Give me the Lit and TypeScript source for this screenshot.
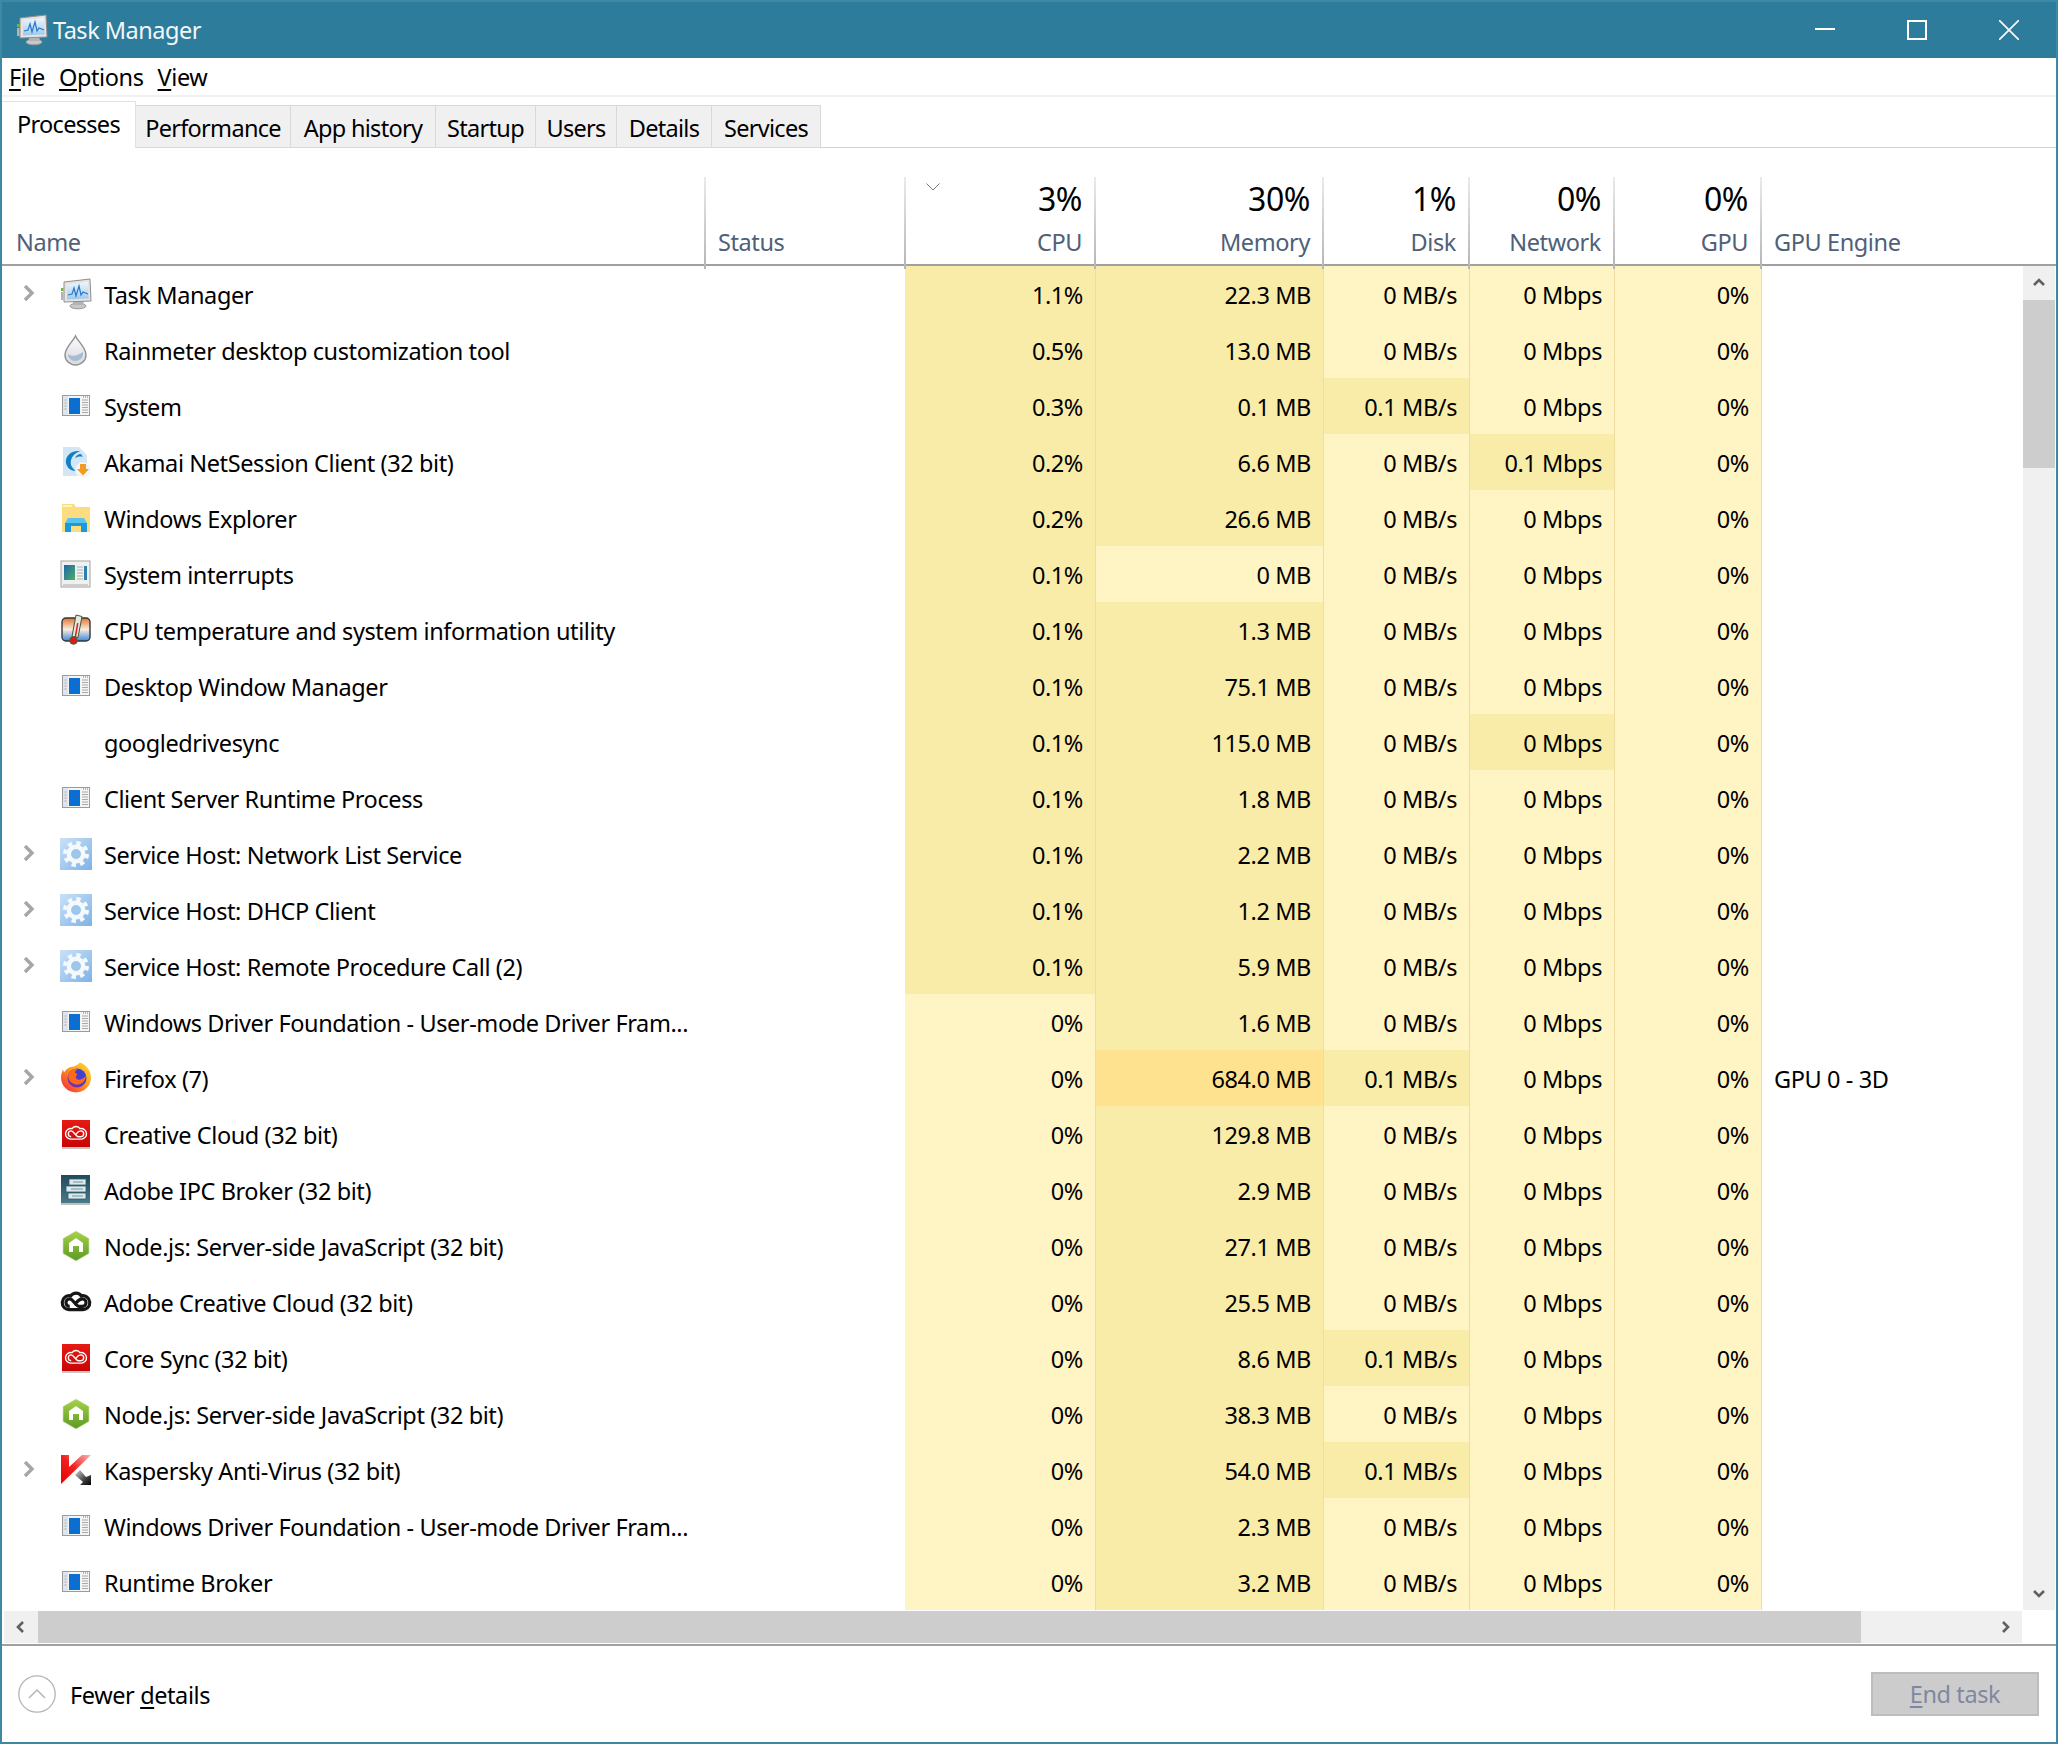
import { LitElement, css, html, svg } from "lit";
import { customElement } from "lit/decorators.js";

type IconName = "tm" | "drop" | "win" | "akamai" | "folder" | "irq" | "temp" | "none" | "gear" | "firefox" | "cc" | "ipc" | "node" | "acc" | "kav";

interface Proc {
  name: string;
  icon: IconName;
  expand?: boolean;
  cpu: string;
  mem: string;
  disk: string;
  net: string;
  engine?: string;
  hot?: boolean; // googledrivesync has a warm network cell with 0 Mbps
}

const p = (name: string, icon: IconName, expand: boolean, cpu: string, mem: string, disk = "0 MB/s", net = "0 Mbps", engine = "", hot = false): Proc => ({
  name, icon, expand, cpu, mem, disk, net, engine, hot,
});

const PROCS: Proc[] = [
  p("Task Manager", "tm", true, "1.1%", "22.3 MB"),
  p("Rainmeter desktop customization tool", "drop", false, "0.5%", "13.0 MB"),
  p("System", "win", false, "0.3%", "0.1 MB", "0.1 MB/s"),
  p("Akamai NetSession Client (32 bit)", "akamai", false, "0.2%", "6.6 MB", "0 MB/s", "0.1 Mbps"),
  p("Windows Explorer", "folder", false, "0.2%", "26.6 MB"),
  p("System interrupts", "irq", false, "0.1%", "0 MB"),
  p("CPU temperature and system information utility", "temp", false, "0.1%", "1.3 MB"),
  p("Desktop Window Manager", "win", false, "0.1%", "75.1 MB"),
  p("googledrivesync", "none", false, "0.1%", "115.0 MB", "0 MB/s", "0 Mbps", "", true),
  p("Client Server Runtime Process", "win", false, "0.1%", "1.8 MB"),
  p("Service Host: Network List Service", "gear", true, "0.1%", "2.2 MB"),
  p("Service Host: DHCP Client", "gear", true, "0.1%", "1.2 MB"),
  p("Service Host: Remote Procedure Call (2)", "gear", true, "0.1%", "5.9 MB"),
  p("Windows Driver Foundation - User-mode Driver Fram...", "win", false, "0%", "1.6 MB"),
  p("Firefox (7)", "firefox", true, "0%", "684.0 MB", "0.1 MB/s", "0 Mbps", "GPU 0 - 3D"),
  p("Creative Cloud (32 bit)", "cc", false, "0%", "129.8 MB"),
  p("Adobe IPC Broker (32 bit)", "ipc", false, "0%", "2.9 MB"),
  p("Node.js: Server-side JavaScript (32 bit)", "node", false, "0%", "27.1 MB"),
  p("Adobe Creative Cloud (32 bit)", "acc", false, "0%", "25.5 MB"),
  p("Core Sync (32 bit)", "cc", false, "0%", "8.6 MB", "0.1 MB/s"),
  p("Node.js: Server-side JavaScript (32 bit)", "node", false, "0%", "38.3 MB"),
  p("Kaspersky Anti-Virus (32 bit)", "kav", true, "0%", "54.0 MB", "0.1 MB/s"),
  p("Windows Driver Foundation - User-mode Driver Fram...", "win", false, "0%", "2.3 MB"),
  p("Runtime Broker", "win", false, "0%", "3.2 MB"),
];

const CLOUD = svg`
  <path d="M10 23a6.6 6.6 0 1 1 1-13c2.4-3.6 8-3.6 10 0a6.6 6.6 0 1 1 1 13z" />
  <path d="M10 20a3.6 3.6 0 1 1 0-7.200c3.400 0 5.500 7.200 9 7.200h3a3.600 3.600 0 1 0 0-7.200c-2.500 0-4.500 2-6 4" />`;

function iconBody(name: IconName) {
  switch (name) {
    case "tm":
      return svg`
        <defs><linearGradient id="tmS" x1="0" y1="0" x2="0" y2="1"><stop offset="0" stop-color="#eef6fc" /><stop offset="1" stop-color="#9fc9ec" /></linearGradient></defs>
        <ellipse cx="18" cy="28" rx="8" ry="2.800" fill="#c8c8c8" stroke="#9a9a9a" />
        <path d="M13 22h10l1 5H13z" fill="#b4b4b4" />
        <path d="M4 4 30 1l1 22-27 1z" fill="#e4e4e4" stroke="#8e8e8e" />
        <path d="M7 6.500 28 4l.700 16.500L7 21.500z" fill="url(#tmS)" />
        <path d="M8 17l4-1 2-6 2 8 3-10 2 9 2-3 5 2" fill="none" stroke="#2778cc" stroke-width="1.200" />
        <path d="M1 10h2.500v3H1z" fill="#6cbb3c" /><path d="M1 14h2.500v8H1z" fill="#b4b4b4" />`;
    case "drop":
      return svg`
        <defs><linearGradient id="dr" x1="0" y1="0" x2="0" y2="1"><stop offset="0" stop-color="#fbfbfb" /><stop offset="1" stop-color="#d6dadf" /></linearGradient></defs>
        <path d="M15.500 2c2 5 10.500 11 10.500 19a10.500 10 0 0 1-21 0C5 13 13.500 7 15.500 2z" fill="url(#dr)" stroke="#8f8f8f" stroke-width="1.400" />
        <path d="M8 20c4 3 9 2 15-2 1 5-3 9-7.500 9S8 24 8 20z" fill="#a9bcd6" />`;
    case "win":
      return svg`
        <rect x="2.500" y="5.500" width="27" height="20" fill="#f5f5f5" stroke="#9b9b9b" />
        <rect x="3" y="6" width="5" height="19" fill="#dfe5ee" />
        <rect x="9" y="8" width="11" height="16" fill="#0b6fd2" />
        <path d="M22 10h6M22 12.500h6M22 15h6M22 17.500h6M22 20h6M22 22.500h6M4.500 10h2M4.500 13h2M4.500 16h2M4.500 19h2" stroke="#a8a8a8" />
        <path d="M23 7h1M25 7h1M27 7h1" stroke="#777" />`;
    case "akamai":
      return svg`
        <path d="M3 1h16l8 8v16l-5 5H3z" fill="#d3e6f5" />
        <path d="M20 5C11 4 5 10 6 17c1 5 5 8 10 8-4-3-6-6-5-11 1-4 4-7 9-9z" fill="#1280c4" />
        <path d="M21 8c-3 0-5 2-6 4 2-1 5-2 8-1z" fill="#1280c4" />
        <circle cx="23" cy="24" r="7.800" fill="#f2f6fa" />
        <path d="M20 18h6v5h3l-6 6.500L17 23h3z" fill="#f39a22" />`;
    case "folder":
      return svg`
        <path d="M2 2h12l2 3h14v25H2z" fill="#fbdd80" />
        <path d="M3 3h9v2H3z" fill="#fff3c2" />
        <path d="M5 30V21h22v9h-6v-6H11v6z" fill="#1a9ad8" />
        <path d="M5 21l3-5h16l3 5z" fill="#59c3ee" />`;
    case "irq":
      return svg`
        <defs><linearGradient id="iq" x1="0" y1="0" x2="1" y2="1"><stop offset="0" stop-color="#1d66a8" /><stop offset="1" stop-color="#4fae66" /></linearGradient></defs>
        <rect x="1" y="3" width="29" height="26" fill="#f0f0f0" stroke="#a3a3a3" />
        <rect x="4" y="7" width="11" height="15" fill="url(#iq)" />
        <path d="M17 9h6M17 12h6M17 15h6M17 18h6M17 21h6" stroke="#b0b0b0" />
        <rect x="24" y="8" width="3" height="14" fill="#2c7fb0" />
        <rect x="3" y="26" width="25" height="2" fill="#cfcfcf" />`;
    case "temp":
      return svg`
        <defs><linearGradient id="tp" x1="0" y1="0" x2="0" y2="1"><stop offset="0" stop-color="#e8722a" /><stop offset=".5" stop-color="#f9ecdd" /><stop offset="1" stop-color="#3f86e0" /></linearGradient></defs>
        <rect x="2" y="4" width="28" height="23" rx="4" fill="url(#tp)" stroke="#33363c" stroke-width="1.400" />
        <path d="M16 1l6 1.500-4 21-6-1z" fill="#e9e9df" stroke="#3c5a38" />
        <path d="M17 9l1.500.300-2.600 15-1.500-.300z" fill="#d92020" />
        <circle cx="13.500" cy="26.500" r="3.800" fill="#e01818" stroke="#3c6b38" />`;
    case "gear":
      return svg`
        <defs><linearGradient id="gr" x1="0" y1="0" x2="1" y2="1"><stop offset="0" stop-color="#c9e2f8" /><stop offset="1" stop-color="#7fb2e4" /></linearGradient></defs>
        <rect width="32" height="32" fill="url(#gr)" />
        <circle cx="16" cy="16" r="11" fill="none" stroke="#f4f9fd" stroke-width="4" stroke-dasharray="4.300 4.340" />
        <circle cx="16" cy="16" r="7.200" fill="none" stroke="#f4f9fd" stroke-width="4.500" />
        <circle cx="16" cy="16" r="4.500" fill="#9cc6ec" />`;
    case "firefox":
      return svg`
        <defs>
          <linearGradient id="ff" x1="1" y1="0" x2="0" y2="1"><stop offset="0" stop-color="#ffe12e" /><stop offset=".45" stop-color="#ff9a1f" /><stop offset="1" stop-color="#f0203c" /></linearGradient>
          <linearGradient id="fg" x1="1" y1="0" x2="0" y2="1"><stop offset="0" stop-color="#2348e6" /><stop offset="1" stop-color="#8a2aa8" /></linearGradient>
        </defs>
        <path d="M20 .500c6 2 11 8 11 15a15 15 0 1 1-30 0c0-3 1-6 2-8l1 3c2-3 5-6 10-6 2-1 4-2 6-4z" fill="url(#ff)" />
        <circle cx="17" cy="16" r="9.500" fill="url(#fg)" />
        <path d="M9 11c2-3 6-5 9-4-2 1-3 2-3 4 2 0 3 2 1 3-1 3 3 5 6 3 2-1 3-2 4-3-1 7-7 10-12 8-5-2-7-7-5-11z" fill="#ff6a1a" />`;
    case "cc":
      return svg`
        <defs><linearGradient id="cr" x1="0" y1="0" x2="0" y2="1"><stop offset="0" stop-color="#e51b14" /><stop offset="1" stop-color="#c90505" /></linearGradient></defs>
        <rect x="2" y="2" width="28" height="27" fill="url(#cr)" />
        <rect x="2" y="29" width="28" height="2" fill="#c8c8c8" />
        <g transform="translate(16 15.500) scale(.8) translate(-16 -16)" fill="none" stroke="#fff" stroke-width="1.700">${CLOUD}</g>`;
    case "ipc":
      return svg`
        <defs><linearGradient id="ip" x1="0" y1="0" x2="0" y2="1"><stop offset="0" stop-color="#1f4a5c" /><stop offset="1" stop-color="#4a7a88" /></linearGradient></defs>
        <rect x="1" y="1" width="29" height="28" fill="url(#ip)" />
        <rect x="1" y="29" width="29" height="2" fill="#c0c0c0" />
        <path d="M9 5h17v6H9zM6 12h20v6H6zM8 19h18v6H8z" fill="#dfe9ec" stroke="#2b5a6a" stroke-width=".8" />
        <path d="M13 8h10M11 15h12M12 22h11" stroke="#6f95a2" />`;
    case "node":
      return svg`
        <defs><linearGradient id="nd" x1="0" y1="0" x2="0" y2="1"><stop offset="0" stop-color="#a7d24a" /><stop offset="1" stop-color="#5b9a24" /></linearGradient></defs>
        <path d="M16 1l13 7.500v15L16 31 3 23.500v-15z" fill="url(#nd)" stroke="#d5e8b0" stroke-width=".6" />
        <path d="M16 8l7 5v9h-4v-6h-6v6H9v-9z" fill="#fff" />`;
    case "acc":
      return svg`<g transform="translate(16 16.200) scale(1.050) translate(-16 -16)" fill="none" stroke="#161616" stroke-width="3">${CLOUD}</g>`;
    case "kav":
      return svg`
        <defs>
          <linearGradient id="kr" x1="1" y1="0" x2="0" y2="1"><stop offset="0" stop-color="#f8b6b6" /><stop offset=".5" stop-color="#f02020" /><stop offset="1" stop-color="#e60000" /></linearGradient>
          <linearGradient id="ka" x1="0" y1="0" x2="1" y2="1"><stop offset="0" stop-color="#d5d5d5" /><stop offset=".6" stop-color="#444" /><stop offset="1" stop-color="#000" /></linearGradient>
        </defs>
        <path d="M1 1h8v12L22 1h9L1 30z" fill="url(#kr)" />
        <path d="M15 21l5-5 6 7 5-2v10H20l3-3z" fill="url(#ka)" />`;
    default:
      return svg``;
  }
}

function icon(name: IconName) {
  return html`<svg class="icon" viewBox="0 0 32 32" width="32" height="32">${iconBody(name)}</svg>`;
}

function chevron(dir: "up" | "down" | "left" | "right") {
  const d = { up: "M2 9l5-5 5 5", down: "M2 5l5 5 5-5", left: "M9 2 4 7l5 5", right: "M5 2l5 5-5 5" }[dir];
  return html`<svg class="arrow" viewBox="0 0 14 14" width="14" height="14"><path d=${d} fill="none" stroke="#606060" stroke-width="2.600" /></svg>`;
}

@customElement("app-root")
export class AppRoot extends LitElement {
  static styles = css`
    :host {
      display: block;
      width: 2058px;
      height: 1744px;
      font-family: "Noto Sans", "Open Sans", sans-serif;
      font-size: 23.5px;
      letter-spacing: -0.4px;
      color: #000;
    }

    .window {
      box-sizing: border-box;
      width: 2058px;
      height: 1744px;
      display: flex;
      flex-direction: column;
      background: #fff;
      border: 2px solid #3f88a4;
      overflow: hidden;
    }

    .titlebar {
      height: 56px;
      flex: none;
      display: flex;
      align-items: center;
      background: #2e7c9b;
      color: #fff;
      padding-right: 1px;
    }
    .titlebar .icon {
      margin-left: 14px;
      margin-right: 5px;
    }
    .title {
      flex: 1;
      color: #f2f7f9;
      letter-spacing: -0.5px;
    }
    .winbtn {
      width: 92px;
      height: 56px;
      display: flex;
      align-items: center;
      justify-content: center;
    }

    .menu {
      height: 39px;
      flex: none;
      box-sizing: border-box;
      display: flex;
      align-items: center;
      gap: 14px;
      padding-left: 7px;
      border-bottom: 2px solid #f2f2f2;
    }

    .tabs {
      height: 51px;
      flex: none;
      box-sizing: border-box;
      display: flex;
      align-items: flex-end;
      border-bottom: 1px solid #d2d2d2;
      letter-spacing: -0.7px;
    }
    .tab {
      box-sizing: border-box;
      height: 43px;
      margin-bottom: -1px;
      padding-top: 2px;
      display: flex;
      align-items: center;
      justify-content: center;
      background: #f0f0f0;
      border: solid #d9d9d9;
      border-width: 1px 1px 1px 0;
    }
    .tab:nth-child(1) { width: 134px; }
    .tab:nth-child(2) { width: 155px; }
    .tab:nth-child(3) { width: 145px; }
    .tab:nth-child(4) { width: 100px; }
    .tab:nth-child(5) { width: 81px; }
    .tab:nth-child(6) { width: 95px; }
    .tab:nth-child(7) { width: 109px; }
    .tab.active {
      height: 47px;
      padding: 0 0 3px 0;
      background: #fff;
      border-color: #e2e2e2;
      border-bottom: none;
    }

    .head {
      height: 118px;
      flex: none;
      box-sizing: border-box;
      padding-top: 29px;
      display: grid;
      grid-template-columns: 704px 200px 190px 228px 146px 145px 147px 1fr;
      border-bottom: 2px solid #a0a0a0;
    }
    .hcell {
      box-sizing: border-box;
      position: relative;
      display: flex;
      flex-direction: column;
      align-items: flex-end;
      justify-content: flex-end;
      padding: 0 12px 11px 0;
      border-right: 2px solid;
      border-image: linear-gradient(#ebebeb, #b4b4b4) 1;
    }
    .hcell.left {
      align-items: flex-start;
      padding-left: 12px;
    }
    .hcell.first {
      padding-left: 14px;
    }
    .hcell.last {
      border-right: none;
    }
    .pct {
      font-size: 32px;
      line-height: 44px;
      margin-bottom: 5px;
    }
    .label {
      color: #4f6079;
      line-height: 32px;
    }
    .sort {
      position: absolute;
      left: 20px;
      top: 6px;
    }

    .middle {
      height: 1344px;
      flex: none;
      display: flex;
      overflow: hidden;
    }
    .rows {
      width: 2021px;
      flex: none;
    }
    .row {
      height: 56px;
      display: grid;
      grid-template-columns: 903px 191px 228px 146px 145px 147px 261px;
      align-items: stretch;
    }
    .name {
      display: grid;
      grid-template-columns: 58px 32px 1fr;
      align-items: center;
    }
    .expander {
      justify-self: end;
      margin-right: 25px;
      margin-top: -3px;
      display: flex;
    }
    .label-cell {
      padding: 1px 0 0 12px;
      white-space: nowrap;
    }
    .icon {
      display: block;
    }
    .num {
      box-sizing: border-box;
      display: flex;
      align-items: center;
      justify-content: flex-end;
      padding: 1px 12px 0 0;
      border-right: 1px solid #efdca0;
      background: #fff4c4;
    }
    .num.m {
      background: #f9eca8;
    }
    .num.h {
      background: #ffe28f;
    }
    .engine {
      display: flex;
      align-items: center;
      padding: 1px 0 0 12px;
    }

    .vbar {
      width: 32px;
      flex: none;
      display: flex;
      flex-direction: column;
      background: #f0f0f0;
    }
    .sbtn {
      flex: none;
      display: flex;
      align-items: center;
      justify-content: center;
    }
    .vbar .sbtn {
      height: 34px;
    }
    .vthumb {
      height: 168px;
      flex: none;
      background: #cdcdcd;
    }
    .spacer {
      flex: 1;
    }

    .hrow {
      height: 34px;
      flex: none;
      display: flex;
      padding-left: 2px;
      border-bottom: 2px solid #a0a0a0;
      box-sizing: content-box;
    }
    .hbar {
      width: 2018px;
      height: 32px;
      margin-top: 1px;
      display: flex;
      background: #f0f0f0;
    }
    .hbar .sbtn {
      width: 34px;
    }
    .hthumb {
      width: 1823px;
      flex: none;
      background: #cdcdcd;
    }

    .footer {
      flex: 1;
      display: flex;
      align-items: center;
      padding: 0 17px 0 16px;
    }
    .fewer {
      flex: 1;
      display: flex;
      align-items: center;
      gap: 14px;
    }
    .fewer span {
      padding-top: 2px;
    }
    .circle {
      width: 38px;
      height: 38px;
      display: block;
    }
    .endtask {
      box-sizing: border-box;
      width: 168px;
      height: 44px;
      display: flex;
      align-items: center;
      justify-content: center;
      background: #cccccc;
      border: 2px solid #bdbdbd;
      color: #7f88a2;
    }
    u {
      text-underline-offset: 3px;
    }
  `;

  renderRow(r: Proc) {
    return html`<div class="row">
      <div class="name">
        <span class="expander">${r.expand ? html`<svg viewBox="0 0 12 18" width="12" height="18"><path d="M2 2l7 7-7 7" fill="none" stroke="#a6a6a6" stroke-width="3.400" /></svg>` : ""}</span>
        ${icon(r.icon)}
        <span class="label-cell">${r.name}</span>
      </div>
      <div class="num ${r.cpu.startsWith("0%") ? "" : "m"}">${r.cpu}</div>
      <div class="num ${r.mem === "0 MB" ? "" : r.mem === "684.0 MB" ? "h" : "m"}">${r.mem}</div>
      <div class="num ${r.disk === "0 MB/s" ? "" : "m"}">${r.disk}</div>
      <div class="num ${r.net === "0 Mbps" && !r.hot ? "" : "m"}">${r.net}</div>
      <div class="num">0%</div>
      <div class="engine">${r.engine}</div>
    </div>`;
  }

  render() {
    return html`<div class="window">
      <div class="titlebar">
        ${icon("tm")}
        <span class="title">Task Manager</span>
        <span class="winbtn"><svg width="20" height="20" viewBox="0 0 20 20"><path d="M0 9h20" stroke="#fff" stroke-width="2" /></svg></span>
        <span class="winbtn"><svg width="20" height="20" viewBox="0 0 20 20"><rect x="1" y="1" width="18" height="18" fill="none" stroke="#fff" stroke-width="2" /></svg></span>
        <span class="winbtn"><svg width="20" height="20" viewBox="0 0 20 20"><path d="M0 0l20 20M20 0 0 20" stroke="#fff" stroke-width="1.600" /></svg></span>
      </div>
      <div class="menu">
        <span><u>F</u>ile</span>
        <span><u>O</u>ptions</span>
        <span><u>V</u>iew</span>
      </div>
      <div class="tabs">
        <div class="tab active">Processes</div>
        <div class="tab">Performance</div>
        <div class="tab">App history</div>
        <div class="tab">Startup</div>
        <div class="tab">Users</div>
        <div class="tab">Details</div>
        <div class="tab">Services</div>
      </div>
      <div class="head">
        <div class="hcell left first"><span class="label">Name</span></div>
        <div class="hcell left"><span class="label">Status</span></div>
        <div class="hcell">
          <svg class="sort" width="14" height="8" viewBox="0 0 14 8"><path d="M.5.500 7 7 13.500.500" fill="none" stroke="#7b7b7b" stroke-width="1" /></svg>
          <span class="pct">3%</span><span class="label">CPU</span>
        </div>
        <div class="hcell"><span class="pct">30%</span><span class="label">Memory</span></div>
        <div class="hcell"><span class="pct">1%</span><span class="label">Disk</span></div>
        <div class="hcell"><span class="pct">0%</span><span class="label">Network</span></div>
        <div class="hcell"><span class="pct">0%</span><span class="label">GPU</span></div>
        <div class="hcell left last"><span class="label">GPU Engine</span></div>
      </div>
      <div class="middle">
        <div class="rows">${PROCS.map((r) => this.renderRow(r))}</div>
        <div class="vbar">
          <div class="sbtn">${chevron("up")}</div>
          <div class="vthumb"></div>
          <div class="spacer"></div>
          <div class="sbtn">${chevron("down")}</div>
        </div>
      </div>
      <div class="hrow">
        <div class="hbar">
          <div class="sbtn">${chevron("left")}</div>
          <div class="hthumb"></div>
          <div class="spacer"></div>
          <div class="sbtn">${chevron("right")}</div>
        </div>
      </div>
      <div class="footer">
        <div class="fewer">
          <svg class="circle" viewBox="0 0 38 38"><circle cx="19" cy="19" r="18.200" fill="none" stroke="#b4b4b4" stroke-width="1.300" /><path d="M11 23l8-8 8 8" fill="none" stroke="#b4b4b4" stroke-width="1.500" /></svg>
          <span>Fewer <u>d</u>etails</span>
        </div>
        <div class="endtask"><span><u>E</u>nd task</span></div>
      </div>
    </div>`;
  }
}
